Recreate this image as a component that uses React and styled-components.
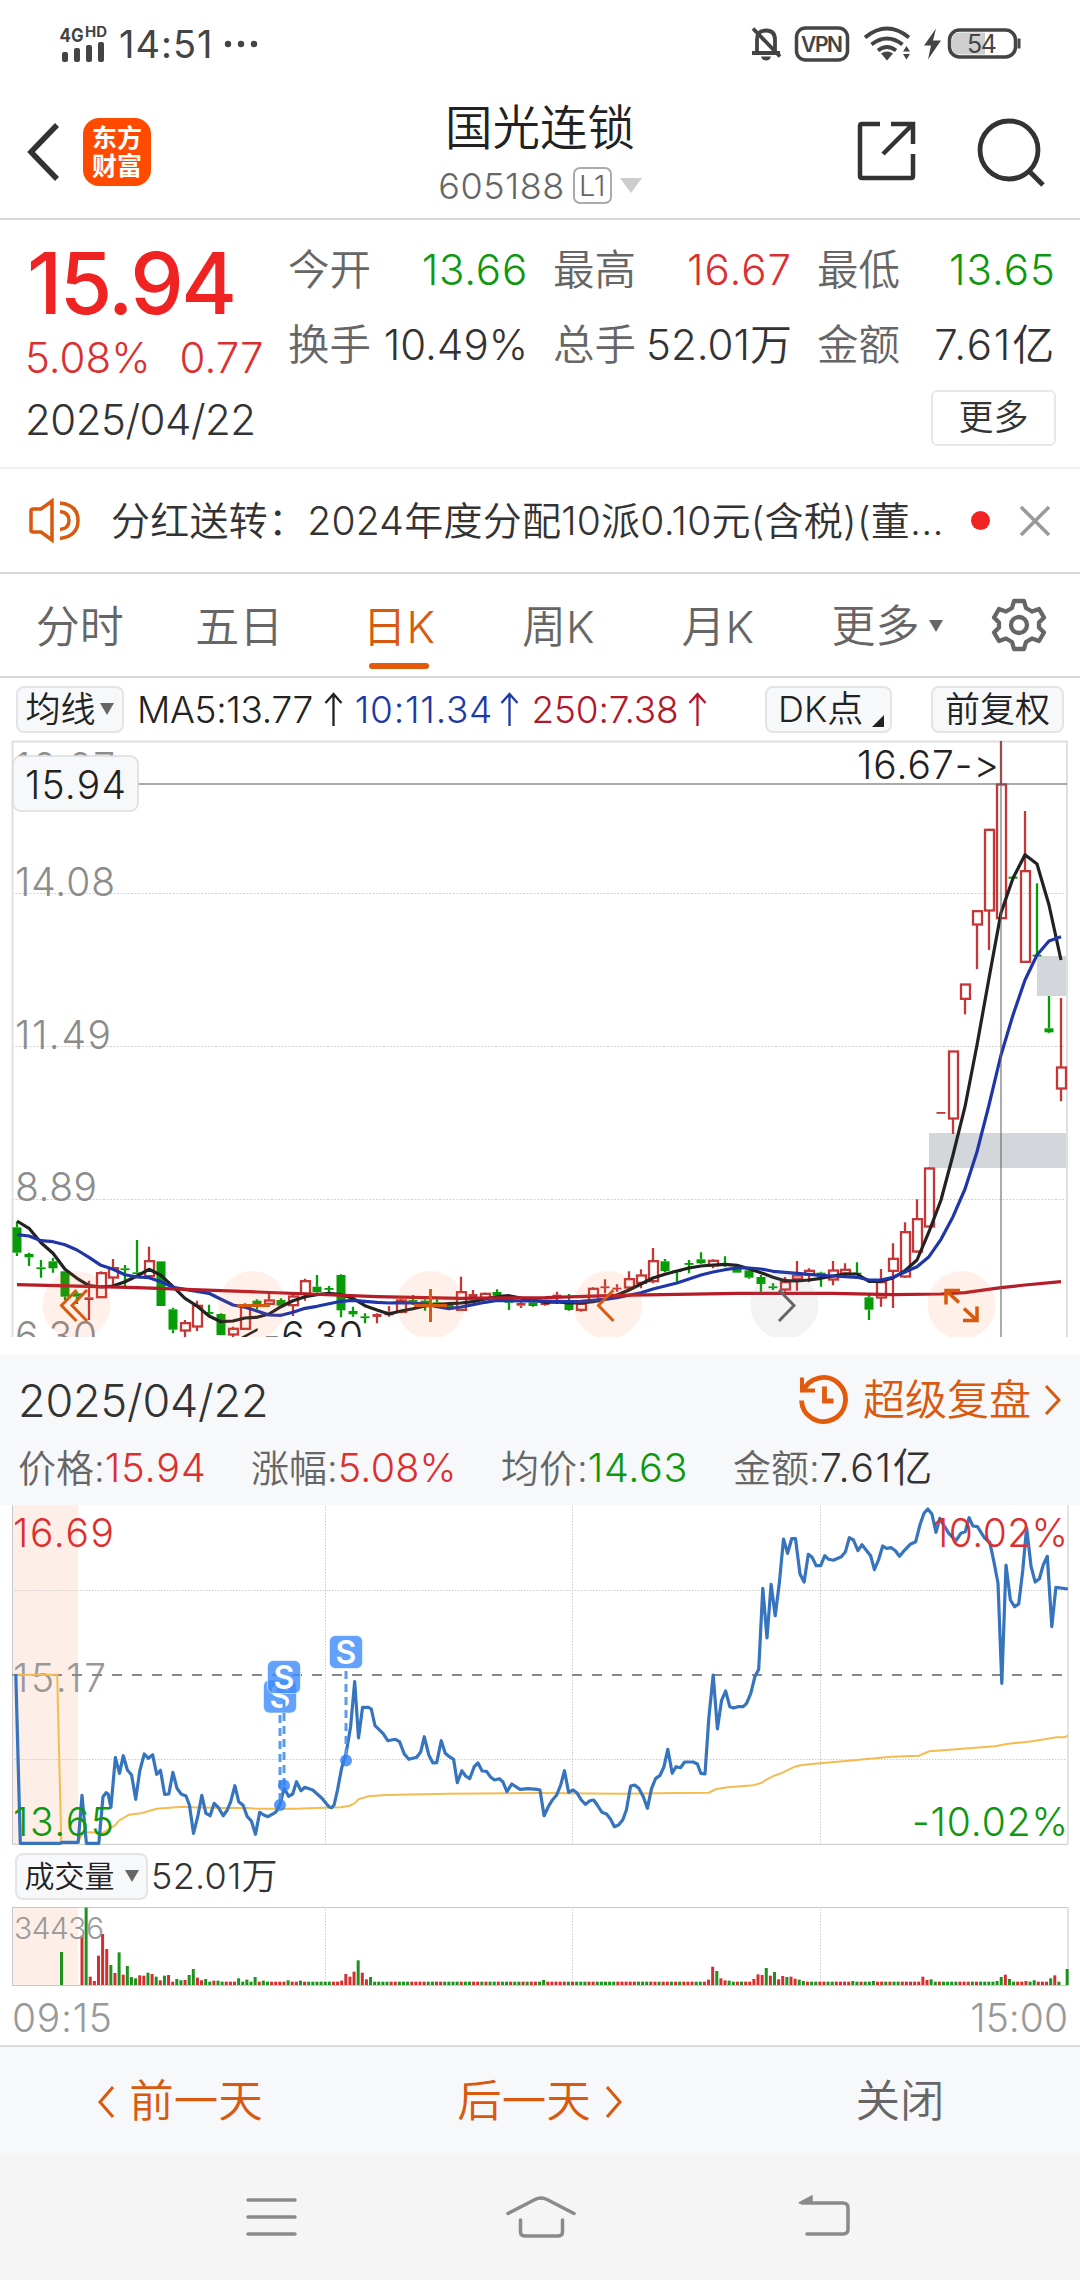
import styled, { createGlobalStyle } from "styled-components";

const GlobalStyle = createGlobalStyle`
  * {
    box-sizing: border-box;
  }

  body {
    margin: 0;
    background: #fff;
    color: #333;
    font-family: Inter, "Noto Sans CJK SC", sans-serif;
    font-weight: 350;
    font-feature-settings: "calt" 0, "liga" 0;
    line-height: 1;
    white-space: nowrap;
  }

  svg {
    display: block;
    flex: none;
  }

  svg text {
    font-family: Inter, "Noto Sans CJK SC", sans-serif;
  }
`;

const RED = "#dc3030";
const GREEN = "#0e980e";
const ORANGE = "#d9590f";

const StScreen = styled.div`
  width: 1080px;
  height: 2280px;
  overflow: hidden;
  background: #fff;
`;

const StText = styled.span`
  font-size: ${(props) => props.$size}px;
  color: ${(props) => props.$color || "#333"};
  letter-spacing: ${(props) => props.$track || 0}px;
  font-weight: ${(props) => props.$weight || 350};
`;

/* ---------- status bar ---------- */

const StStatusBar = styled.div`
  display: flex;
  justify-content: space-between;
  height: 84px;
  padding: 20px 58px 0 59px;
`;

const StStatusSide = styled.div`
  display: flex;
  align-items: center;
  height: 48px;
  gap: ${(props) => props.$gap}px;
`;

function StatusBar() {
  return (
    <StStatusBar>
      <StStatusSide $gap={10}>
        <svg width="50" height="48" viewBox="59 15 50 48" fill="#444">
          <text x="59.500" y="36.500" fontSize="19" fontWeight="700" textLength="24" lengthAdjust="spacingAndGlyphs">4G</text>
          <text x="85" y="32" fontSize="14" fontWeight="700" textLength="22" lengthAdjust="spacingAndGlyphs">HD</text>
          <rect x="62" y="47" width="6" height="10" rx="2" />
          <rect x="74" y="43" width="6" height="14" rx="2" />
          <rect x="86" y="40" width="6" height="17" rx="2" />
          <rect x="98" y="37" width="6" height="20" rx="2" />
        </svg>
        <StText $size={38} $color="#444" $weight={400} $track={1}>14:51</StText>
        <svg width="34" height="8" viewBox="0 0 34 8" fill="#444">
          <circle cx="4" cy="4" r="3.200" />
          <circle cx="17" cy="4" r="3.200" />
          <circle cx="30" cy="4" r="3.200" />
        </svg>
      </StStatusSide>
      <StStatusSide $gap={0}>
        <svg width="272" height="40" viewBox="750 22.500 272 40" fill="none" stroke="#444">
          <path d="M757 50V38q0-9 9-9t9 9v12M752 51.500h28" strokeWidth="3.800" />
          <path d="M761 55h10q-1 4-5 4t-5-4z" fill="#444" stroke="none" />
          <path d="M753 27l27 28" strokeWidth="3.800" />
          <rect x="796.500" y="26.500" width="51" height="32" rx="9" strokeWidth="3.500" />
          <text x="801" y="50.500" fontSize="21" fontWeight="600" fill="#444" stroke="none" textLength="42">VPN</text>
          <path d="M865 36q22-18 44 0M871.500 43q15.500-12 31 0M878 49q9-7 18 0" strokeWidth="4" />
          <path d="M881 52q6-4 12 0l-6 7z" fill="#444" stroke="none" />
          <path d="M903 50l3.500-5.500 3.500 5.500zM903 52.500l3.500 5.500 3.500-5.500z" fill="#444" stroke="none" />
          <path d="M936 27l-12 17h7l-3 14 13-19h-8z" fill="#444" stroke="none" />
          <path d="M960 31h25v22h-25q-8 0-8-8v-6q0-8 8-8z" fill="#cfcfcf" stroke="none" />
          <rect x="949.500" y="28.500" width="66" height="27" rx="10" strokeWidth="3.500" />
          <path d="M1019 37v10" strokeWidth="3" />
          <text x="967" y="51" fontSize="25" fontWeight="400" fill="#444" stroke="none" textLength="30">54</text>
        </svg>
      </StStatusSide>
    </StStatusBar>
  );
}

/* ---------- title bar ---------- */

const StHeader = styled.header`
  display: grid;
  grid-template-columns: 400px 1fr 400px;
  height: 136px;
  border-bottom: 2px solid #dadada;
`;

const StHeaderLeft = styled.div`
  display: flex;
  gap: 20px;
  padding: 34px 0 0 25px;
`;

const StLogo = styled.div`
  display: flex;
  flex-direction: column;
  align-items: center;
  justify-content: center;
  gap: 3px;
  width: 68px;
  height: 68px;
  border-radius: 16px;
  background: #ff4a00;
  color: #fff;
  font-size: 25px;
  font-weight: 700;
`;

const StHeaderTitle = styled.div`
  display: flex;
  flex-direction: column;
  align-items: center;
  padding-top: 20px;
  gap: 15px;
`;

const StCode = styled.div`
  display: flex;
  align-items: center;
  gap: 8px;
  height: 38px;
`;

const StLevel = styled.span`
  width: 39px;
  height: 37px;
  border: 2px solid #aaa;
  border-radius: 7px;
  color: #666;
  font-size: 29px;
  line-height: 34px;
  text-align: center;
`;

const StHeaderRight = styled.div`
  display: flex;
  gap: 56px;
  padding: 31px 0 0 175px;
`;

const StTriangle = styled.i`
  width: 0;
  height: 0;
  border-left: ${(props) => props.$w / 2}px solid transparent;
  border-right: ${(props) => props.$w / 2}px solid transparent;
  border-top: ${(props) => props.$h}px solid ${(props) => props.$color};
`;

function Header() {
  return (
    <StHeader>
      <StHeaderLeft>
        <svg width="38" height="68" viewBox="0 0 38 68" fill="none" stroke="#333" strokeWidth="5.500">
          <path d="M32 7L6 34l26 27" />
        </svg>
        <StLogo>
          <span>东方</span>
          <span>财富</span>
        </StLogo>
      </StHeaderLeft>
      <StHeaderTitle>
        <StText $size={47.5} $color="#222">国光连锁</StText>
        <StCode>
          <StText $size={36} $color="#666" $track={0.5}>605188</StText>
          <StLevel>L1</StLevel>
          <StTriangle $w={22} $h={15} $color="#ccc" />
        </StCode>
      </StHeaderTitle>
      <StHeaderRight>
        <svg width="64" height="72" viewBox="855 117 64 72" fill="none" stroke="#333" strokeWidth="4.500">
          <path d="M880 126h-18q-2 0-2 2v50q0 2 2 2h49q2 0 2-2v-22" />
          <path d="M891 126h22v20M913 126l-30 30" />
        </svg>
        <svg width="74" height="76" viewBox="976 114 74 76" fill="none" stroke="#333" strokeWidth="4.800">
          <circle cx="1010" cy="149" r="29" />
          <path d="M1030 170l14 14" strokeWidth="5" />
        </svg>
      </StHeaderRight>
    </StHeader>
  );
}

/* ---------- quote ---------- */

const StQuote = styled.section`
  display: grid;
  grid-template-columns: 288px 1fr;
  height: 249px;
  padding-top: 28px;
  border-bottom: 2px solid #efefef;
`;

const StQuotePrice = styled.div`
  display: flex;
  flex-direction: column;
  padding-left: 25px;
`;

const StBigPrice = styled.div`
  height: 88px;
  padding-left: 2px;
  color: #f02323;
  font-size: 85px;
  font-weight: 500;
  line-height: 72px;
  letter-spacing: -2.5px;
`;

const StChange = styled.div`
  display: flex;
  gap: 29px;
  height: 63px;
  line-height: 44px;
`;

const StQuoteGrid = styled.div`
  display: grid;
  grid-template-columns: 240px 264px 264px;
  grid-template-rows: 75px 67px;
`;

const StCell = styled.div`
  display: flex;
  justify-content: space-between;
  line-height: 44px;
  padding-left: ${(props) => props.$left || 0}px;
`;

const StMore = styled.div`
  grid-column: 1 / 4;
  justify-self: end;
  width: 125px;
  height: 56px;
  border: 2px solid #e8e8e8;
  border-radius: 6px;
  font-size: 35px;
  line-height: 50px;
  text-align: center;
`;

const quoteCells = [
  ["今开", "13.66", GREEN, 0, 0.8],
  ["最高", "16.67", RED, 25, 1],
  ["最低", "13.65", GREEN, 25, 1],
  ["换手", "10.49%", "#333", 0, 0],
  ["总手", "52.01万", "#333", 25, 0],
  ["金额", "7.61亿", "#333", 25, 1.8],
];

function Quote() {
  return (
    <StQuote>
      <StQuotePrice>
        <StBigPrice>15.94</StBigPrice>
        <StChange>
          <StText $size={42} $color={RED}>5.08%</StText>
          <StText $size={42} $color={RED}>0.77</StText>
        </StChange>
        <StText $size={42} $track={-0.5}>2025/04/22</StText>
      </StQuotePrice>
      <StQuoteGrid>
        {quoteCells.map(([label, value, color, left, track]) => (
          <StCell key={label} $left={left}>
            <StText $size={41.5} $color="#666">{label}</StText>
            <StText $size={42} $color={color} $track={track}>{value}</StText>
          </StCell>
        ))}
        <StMore>更多</StMore>
      </StQuoteGrid>
    </StQuote>
  );
}

/* ---------- notice ---------- */

const StNotice = styled.section`
  display: flex;
  align-items: center;
  height: 105px;
  padding: 0 28px;
  border-bottom: 2px solid #dadada;
`;

const StNoticeText = styled.div`
  width: 836px;
  margin-left: 29px;
  font-size: 39px;
  letter-spacing: 0.25px;
`;

const StDot = styled.i`
  width: 19px;
  height: 19px;
  margin: 0 28px 0 25px;
  border-radius: 50%;
  background: #f02323;
`;

function Notice() {
  return (
    <StNotice>
      <svg width="54" height="46" viewBox="28 498 54 46" fill="none" stroke={ORANGE} strokeWidth="3.500">
        <path d="M52 501v39L41 532h-8q-2 0-2-2v-19q0-2 2-2h8z" />
        <path d="M60 503q18 2 18 17.500T60 538.500M60 511.500q9 1 9 9t-9 9" />
      </svg>
      <StNoticeText>分红送转：2024年度分配10派0.10元(含税)(董...</StNoticeText>
      <StDot />
      <svg width="34" height="34" viewBox="0 0 34 34" stroke="#999" strokeWidth="3.500">
        <path d="M3 3l28 28M31 3L3 31" />
      </svg>
    </StNotice>
  );
}

/* ---------- period tabs ---------- */

const StTabs = styled.nav`
  display: flex;
  height: 104px;
  border-bottom: 2px solid #dadada;
`;

const StTab = styled.div`
  display: flex;
  flex-direction: column;
  align-items: center;
  width: 159.5px;
  padding-top: 31px;
  font-size: 44px;
  color: ${(props) => (props.$active ? ORANGE : "#666")};

  &::after {
    content: "";
    width: 60px;
    height: 6px;
    margin-top: 14px;
    border-radius: 3px;
    background: ${(props) => (props.$active ? "#e35a0c" : "transparent")};
  }
`;

const StTabMore = styled.div`
  display: flex;
  align-items: center;
  gap: 9px;
  width: 193.5px;
  padding: 2px 0 0 34px;
  height: 102px;
  color: #666;
  font-size: 44px;
`;

const tabs = ["分时", "五日", "日K", "周K", "月K"];

function Tabs() {
  return (
    <StTabs>
      {tabs.map((tab) => (
        <StTab key={tab} $active={tab === "日K"}>{tab}</StTab>
      ))}
      <StTabMore>
        更多
        <StTriangle $w={14} $h={12} $color="#666" />
      </StTabMore>
      <svg width="56" height="102" viewBox="-28 -51 56 102" fill="none" stroke="#666" strokeWidth="4.300" strokeLinejoin="round">
        <path d="M-5-24H5l2 7 6 3.500 7-2.500 5 8.500-5 5v5l5 5-5 8.500-7-2.500-6 3.500-2 7H-5l-2-7-6-3.500-7 2.500-5-8.500 5-5v-5l-5-5 5-8.500 7 2.500 6-3.500z" />
        <circle cx="0" cy="0" r="8" />
      </svg>
    </StTabs>
  );
}

/* ---------- moving average bar ---------- */

const StMaBar = styled.div`
  display: flex;
  align-items: center;
  height: 62px;
  padding: 0 16px;
`;

const StChip = styled.div`
  display: flex;
  align-items: center;
  justify-content: center;
  gap: ${(props) => props.$gap || 0}px;
  width: ${(props) => props.$w}px;
  height: 47px;
  margin-left: ${(props) => props.$ml || 0}px;
  border: 2px solid #e3e4e6;
  border-radius: 8px;
  background: #f7f8fa;
  color: #222;
  font-size: ${(props) => props.$size || 35}px;
`;

const StMaItem = styled.div`
  display: flex;
  align-items: center;
  justify-content: space-between;
  width: ${(props) => props.$w}px;
  margin-left: ${(props) => props.$ml}px;
`;

const StCorner = styled.i`
  align-self: flex-end;
  margin: 0 -5px 4px 0;
  border-left: 12px solid transparent;
  border-bottom: 12px solid #222;
`;

const maItems = [
  { text: "MA5:13.77", color: "#222", w: 206, ml: 13, track: -0.3 },
  { text: "10:11.34", color: "#1c3aa6", w: 165, ml: 12, track: 0.8 },
  { text: "250:7.38", color: "#b3182a", w: 176, ml: 12, track: -0.2 },
];

function MaBar() {
  return (
    <StMaBar>
      <StChip $w={108} $gap={5}>
        均线
        <StTriangle $w={15} $h={12} $color="#666" />
      </StChip>
      {maItems.map((item) => (
        <StMaItem key={item.text} $w={item.w} $ml={item.ml}>
          <StText $size={37} $color={item.color} $track={item.track}>{item.text}</StText>
          <svg width="19" height="34" viewBox="0 0 19 34" fill="none" stroke={item.color} strokeWidth="2.300">
            <path d="M9.500 34V3M1.500 11l8-9 8 9" />
          </svg>
        </StMaItem>
      ))}
      <StChip $w={127} $ml={58} $gap={9} $size={36}>
        DK点
        <StCorner />
      </StChip>
      <StChip $w={133} $ml={39} $size={35}>前复权</StChip>
    </StMaBar>
  );
}

/* ---------- daily K chart ---------- */

// [up, high, open/close top, open/close bottom, low], thirds of a pixel from y = 1140
const candles = [
  [0, 245, 262, 338, 348], [0, 338, 342, 352, 378], [0, 360, 382, 385, 413], [0, 354, 364, 385, 398],
  [0, 394, 394, 470, 480], [0, 455, 460, 470, 492], [1, 422, 472, 480, 540], [1, 394, 398, 473, 473],
  [1, 357, 383, 414, 438], [0, 375, 385, 390, 440], [0, 300, 397, 402, 402], [1, 320, 362, 410, 410],
  [0, 364, 364, 498, 498], [0, 503, 508, 569, 580], [1, 540, 548, 573, 591], [1, 482, 496, 561, 573],
  [0, 494, 516, 520, 530], [0, 520, 522, 585, 585], [1, 560, 565, 585, 591], [1, 490, 495, 568, 570],
  [0, 478, 482, 495, 508], [1, 460, 480, 493, 495], [0, 475, 480, 497, 503], [1, 463, 468, 497, 528],
  [1, 416, 422, 463, 482], [0, 405, 440, 456, 458], [0, 438, 444, 447, 458], [0, 403, 405, 511, 532],
  [0, 500, 513, 523, 530], [0, 520, 529, 532, 550], [1, 520, 522, 531, 550], [1, 498, 515, 526, 530],
  [1, 477, 480, 517, 520], [0, 465, 480, 485, 495], [0, 478, 482, 500, 512], [0, 478, 487, 490, 500],
  [0, 487, 492, 503, 505], [1, 410, 455, 511, 511], [1, 450, 462, 473, 475], [1, 458, 460, 475, 475],
  [0, 448, 456, 467, 470], [0, 480, 483, 488, 510], [1, 483, 489, 497, 504], [0, 483, 487, 498, 500],
  [1, 480, 484, 495, 497], [1, 455, 464, 470, 492], [0, 462, 487, 510, 512], [1, 485, 490, 511, 515],
  [1, 442, 445, 485, 487], [1, 418, 439, 443, 460], [1, 433, 443, 446, 455], [1, 394, 416, 444, 450],
  [1, 388, 405, 430, 445], [1, 324, 362, 425, 430], [0, 357, 364, 393, 397], [0, 390, 391, 394, 425],
  [0, 360, 369, 372, 400], [0, 337, 358, 370, 372], [1, 358, 361, 378, 385], [0, 349, 370, 374, 380],
  [0, 375, 385, 398, 398], [0, 388, 391, 413, 416], [0, 405, 411, 432, 455], [0, 430, 439, 442, 450],
  [1, 411, 425, 450, 455], [1, 363, 405, 418, 452], [1, 385, 391, 405, 427], [0, 395, 398, 410, 440],
  [1, 363, 390, 420, 436], [1, 370, 388, 402, 408], [0, 367, 398, 402, 405], [0, 462, 472, 509, 540],
  [1, 387, 425, 474, 500], [1, 310, 355, 394, 504], [1, 247, 275, 411, 413], [1, 178, 236, 336, 338],
  [1, 82, 84, 261, 261], [1, -84, -84, -79, -79], [1, -267, -267, -63, -18], [1, -468, -468, -422, -377],
  [1, -690, -688, -645, -513], [1, -934, -932, -687, -570], [1, -1197, -1068, -664, -664], [0, -792, -790, -784, -783],
  [1, -987, -808, -533, -533], [0, -770, -556, -551, -551], [0, -432, -335, -323, -320], [1, -426, -219, -153, -116],
];

const ma5 = [
  243, 265, 308, 340, 388, 415, 437, 441, 438, 425, 408, 388, 406, 440, 475, 498, 528, 545, 543, 534, 532, 522,
  500, 482, 470, 464, 460, 464, 475, 497, 510, 522, 513, 506, 498, 494, 491, 489, 485, 477, 470, 467, 474, 480,
  487, 486, 489, 489, 485, 478, 465, 450, 432, 414, 403, 393, 384, 378, 375, 373, 376, 386, 398, 412, 422, 423,
  420, 415, 408, 402, 402, 424, 424, 414, 392, 360, 275, 180, 45, -100, -285, -485, -682, -785, -856, -828, -705, -540,
];

const ma10 = [
  284, 288, 302, 305, 314, 330, 352, 376, 388, 404, 411, 413, 425, 442, 448, 454, 460, 478, 495, 502, 513, 525,
  526, 517, 505, 499, 491, 484, 481, 484, 487, 489, 488, 489, 492, 500, 506, 501, 494, 487, 481, 482, 483, 482,
  483, 484, 485, 484, 481, 478, 473, 466, 458, 447, 438, 429, 417, 405, 396, 389, 384, 384, 387, 394, 397, 400,
  403, 406, 408, 410, 412, 420, 420, 412, 396, 380, 350, 298, 230, 147, 35, -105, -255, -375, -480, -555, -597, -610,
];

const ma250 = [
  [0, 434], [10, 443], [20, 456], [30, 470], [37, 475], [44, 473], [50, 466], [60, 460],
  [68, 460], [73, 464], [77, 462], [79, 458], [82, 443], [84, 435], [87, 425],
];

const dayX = (i) => 17 + i * 12;
const dayY = (v) => 1140 + v / 3;
const dayLine = (pairs) => pairs.map(([i, v]) => `${dayX(i)},${dayY(v).toFixed(1)}`).join(" ");

function Candle({ index, data }) {
  const [up, high, top, bottom, low] = data;
  const x = dayX(index);
  const color = up ? "#c63636" : "#069c06";
  const height = (bottom - top) / 3;
  const solid = !up || height < 4;
  return (
    <g stroke={color} strokeWidth="2.300">
      <path d={`M${x} ${dayY(high)}V${dayY(top)}M${x} ${dayY(bottom)}V${dayY(low)}`} />
      {solid ? (
        <rect x={x - 4.5} y={dayY(top)} width="9" height={Math.max(height, 1.8)} fill={color} stroke="none" />
      ) : (
        <rect x={x - 4} y={dayY(top) + 0.5} width="9" height={height - 1} fill="none" />
      )}
    </g>
  );
}

const StChart = styled.svg`
  width: 1080px;
  height: ${(props) => props.$h}px;
  margin-bottom: ${(props) => props.$mb || 0}px;
`;

function DayChart() {
  return (
    <StChart $h={597} $mb={18} viewBox="0 740 1080 597">
      <g fill="#d3d7dc">
        <rect x="929" y="1133" width="138" height="35" />
        <rect x="1037" y="956" width="30" height="40" />
      </g>
      <g stroke="#d2d2d2" strokeDasharray="2 1.500">
        <path d="M12 893.500H1067M12 1046.500H1067M12 1199.500H1067" />
      </g>
      <path d="M12.500 1337V741.500H1067V1337" fill="none" stroke="#e0e0e0" strokeWidth="2" />
      <g fill="#8c8c8c" fontSize="39">
        <text x="15" y="780.500" textLength="100">16.67</text>
        <text x="15" y="895.500" textLength="100">14.08</text>
        <text x="15" y="1048.500" textLength="96">11.49</text>
        <text x="15" y="1201" textLength="82">8.89</text>
        <text x="15" y="1350" textLength="82">6.30</text>
      </g>
      {candles.map((data, index) => (
        <Candle key={index} index={index} data={data} />
      ))}
      <g fill="none" strokeWidth="3.200" strokeLinejoin="round">
        <polyline points={dayLine(ma5.map((v, i) => [i, v]))} stroke="#222" />
        <polyline points={dayLine(ma10.map((v, i) => [i, v]))} stroke="#2036a8" />
        <polyline points={dayLine(ma250)} stroke="#b51c28" />
      </g>
      <g fill="#222" fontSize="39">
        <text x="857" y="779" textLength="142">16.67-&gt;</text>
        <text x="237" y="1350" textLength="126">&lt;-6.30</text>
      </g>
      <path d="M138 784H1067M1001 741V1337" stroke="#666" strokeOpacity=".55" strokeWidth="2" />
      <rect x="13" y="756" width="125" height="55" rx="8" fill="#f7f8fa" stroke="#dcdcdc" strokeWidth="1.500" />
      <text x="25" y="798.500" fontSize="39" fill="#222" textLength="101">15.94</text>
      <g fill="#fb6a28" fillOpacity=".1">
        <circle cx="76.500" cy="1305" r="34" />
        <circle cx="252.500" cy="1305" r="34" />
        <circle cx="430.500" cy="1305" r="34" />
        <circle cx="608" cy="1305" r="34" />
        <circle cx="784.500" cy="1305" r="34" fill="#888" />
        <circle cx="961.500" cy="1305" r="34" />
      </g>
      <g fill="none" stroke={ORANGE} strokeWidth="3">
        <path d="M76.500 1290l-15 15.500 15 15.500M87 1290l-15 15.500 15 15.500" />
        <path d="M237 1305.500h33M414 1305.500h33M430.500 1289v33" />
        <path d="M613.500 1290l-15 15.500 15 15.500" />
        <path d="M779 1290l15 15.500-15 15.500" stroke="#666" />
        <path d="M960 1290.500h-14v14M946 1290.500l13 12M963 1320.500h14v-14M977 1320.500l-13-12" strokeWidth="3.500" />
      </g>
    </StChart>
  );
}

/* ---------- day detail ---------- */

const StDetail = styled.section`
  height: 150px;
  padding: 17px 19px 0 18px;
  background: #f7f8fa;
`;

const StDetailTop = styled.div`
  display: flex;
  align-items: center;
  justify-content: space-between;
  height: 56px;
`;

const StReplay = styled.div`
  display: flex;
  align-items: center;
  color: ${ORANGE};
  font-size: 42px;

  span {
    margin: 0 12px 0 13px;
  }
`;

const StDetailRow = styled.div`
  display: flex;
  height: 50px;
  margin-top: 15px;
  font-size: 38px;
  line-height: 38px;
`;

const StDetailItem = styled.div`
  width: ${(props) => props.$w}px;
  padding: 6px 0 0 0;
`;

const detailItems = [
  ["价格", "15.94", RED, 233, 0.9],
  ["涨幅", "5.08%", RED, 250, 0.2],
  ["均价", "14.63", GREEN, 232, 0.7],
  ["金额", "7.61亿", "#333", 220, 1.6],
];

function Detail() {
  return (
    <StDetail>
      <StDetailTop>
        <StText $size={45} $track={-0.2}>2025/04/22</StText>
        <StReplay>
          <svg width="52" height="52" viewBox="799 1373.500 52 52" fill="none" stroke="#e35a0c" strokeWidth="4.800">
            <path d="M804 1391a22 22 0 1 1-1.500 9" />
            <path d="M803 1377v13h13" strokeWidth="4" />
            <path d="M825.500 1386v14.500h9" />
          </svg>
          <span>超级复盘</span>
          <svg width="18" height="34" viewBox="0 0 18 34" fill="none" stroke={ORANGE} strokeWidth="3">
            <path d="M3 3l13 14L3 31" />
          </svg>
        </StReplay>
      </StDetailTop>
      <StDetailRow>
        {detailItems.map(([label, value, color, w, track]) => (
          <StDetailItem key={label} $w={w}>
            <StText $size={38} $color="#666">{label}:</StText>
            <StText $size={39.5} $color={color} $track={track}>{value}</StText>
          </StDetailItem>
        ))}
      </StDetailRow>
    </StDetail>
  );
}

/* ---------- minute chart ---------- */

const UNIT = 540 / 1568;
const minuteLine = (pairs) =>
  pairs.map(([x, v]) => `${(x * UNIT).toFixed(1)},${(1500 + v / 3).toFixed(1)}`).join(" ");
const shift = (pairs) => pairs.map(([x, v]) => [x + 1568, v]);

const priceMorning = [
  [46, 522], [59, 1030], [175, 1030], [178, 1027], [227, 1027], [238, 886], [251, 1030], [287, 1030], [299, 890],
  [308, 878], [314, 882], [322, 922], [335, 773], [347, 820], [358, 767], [370, 810], [382, 825], [394, 898],
  [406, 812], [419, 762], [431, 775], [443, 764], [455, 823], [466, 811], [478, 883], [490, 882], [502, 817],
  [514, 865], [526, 882], [540, 888], [550, 915], [562, 1000], [574, 950], [586, 886], [598, 940], [610, 947],
  [622, 910], [634, 922], [648, 947], [660, 930], [670, 905], [682, 857], [693, 905], [706, 916], [718, 950],
  [730, 963], [742, 1003], [754, 937], [766, 945], [778, 950], [795, 940], [802, 935], [813, 913], [825, 865],
  [838, 889], [850, 882], [861, 845], [874, 872], [885, 862], [908, 870], [935, 895], [955, 920], [963, 923],
  [970, 915], [980, 870], [992, 805], [1005, 760], [1018, 680], [1030, 545], [1041, 714], [1053, 622], [1070, 622],
  [1078, 627], [1089, 677], [1112, 700], [1126, 722], [1148, 718], [1160, 725], [1174, 762], [1187, 778],
  [1210, 772], [1222, 755], [1232, 710], [1245, 765], [1257, 789], [1268, 788], [1281, 722], [1293, 760],
  [1305, 770], [1317, 778], [1328, 848], [1341, 812], [1352, 828], [1364, 836], [1377, 800], [1388, 789],
  [1400, 813], [1413, 814], [1425, 832], [1436, 840], [1450, 836], [1460, 845], [1472, 875], [1486, 852],
  [1510, 868], [1535, 866], [1560, 868],
];

const priceAfternoon = [
  [0, 870], [12, 947], [24, 920], [36, 900], [48, 886], [60, 855], [71, 812], [83, 877], [96, 870], [107, 878],
  [120, 900], [132, 913], [145, 902], [156, 900], [168, 918], [180, 937], [193, 942], [205, 958], [216, 980],
  [228, 975], [240, 960], [251, 930], [263, 858], [275, 855], [287, 865], [300, 890], [312, 925], [324, 865],
  [336, 835], [348, 827], [360, 800], [371, 748], [384, 820], [395, 800], [408, 803], [420, 786], [445, 786],
  [457, 792], [467, 820], [479, 822], [490, 655], [503, 525], [515, 687], [527, 602], [539, 573], [551, 620],
  [562, 624], [575, 620], [590, 620], [600, 610], [612, 580], [624, 530], [635, 508], [647, 265], [659, 414],
  [671, 253], [683, 347], [695, 250], [707, 117], [719, 160], [731, 116], [742, 116], [755, 222], [767, 246],
  [779, 163], [790, 172], [802, 197], [815, 197], [827, 167], [838, 178], [852, 181], [875, 170], [887, 155],
  [898, 113], [910, 120], [923, 152], [935, 134], [947, 150], [960, 167], [971, 209], [983, 180], [995, 138],
  [1006, 145], [1020, 143], [1032, 152], [1044, 169], [1055, 155], [1075, 133], [1091, 125], [1103, 75],
  [1115, 40], [1126, 27], [1138, 42], [1150, 97], [1161, 55], [1175, 80], [1187, 100], [1208, 122], [1222, 100],
  [1235, 95], [1246, 53], [1257, 78], [1270, 80], [1290, 113], [1306, 127], [1318, 185], [1330, 250], [1341, 550],
  [1353, 195], [1366, 300], [1378, 320], [1390, 312], [1402, 210], [1413, 83], [1426, 200], [1438, 246],
  [1450, 236], [1461, 195], [1473, 169], [1486, 380], [1498, 262], [1533, 267],
];

const average = [
  [38, 524], [166, 524], [178, 1030], [227, 1027], [240, 999], [255, 997], [300, 998], [335, 975], [345, 962],
  [375, 944], [410, 940], [455, 926], [530, 920], [560, 922], [640, 924], [720, 924], [745, 926], [860, 926],
  [940, 923], [990, 922], [1015, 917], [1030, 910], [1040, 898], [1070, 889], [1120, 885], [1300, 881],
  ...shift([
    [0, 879], [230, 881], [400, 879], [490, 878], [510, 868], [545, 862], [620, 856], [645, 848], [655, 840],
    [680, 827], [700, 820], [740, 800], [760, 795], [830, 788], [920, 780], [1020, 770], [1100, 767], [1130, 754],
    [1180, 750], [1320, 739], [1360, 731], [1430, 724], [1500, 712], [1523, 712], [1533, 707],
  ]),
];

function SellMark({ x, y, from, to }) {
  return (
    <g>
      <path d={`M${x} ${from}V${to}`} stroke="#5a9bea" strokeWidth="3" strokeDasharray="8 5" />
      <circle cx={x} cy={to} r="6" fill="#2f80f5" fillOpacity=".8" />
      <rect x={x - 16.5} y={y} width="33" height="33" rx="6" fill="#3f8dfb" fillOpacity=".82" stroke="#fff" strokeOpacity=".6" />
      <text x={x} y={y + 28} fontSize="32" fontWeight="600" fill="#fff" textAnchor="middle">S</text>
    </g>
  );
}

function MinuteChart() {
  return (
    <StChart $h={340} viewBox="0 1505 1080 340">
      <rect x="12" y="1505" width="66" height="339" fill="#fdeee8" />
      <g stroke="#ccc" strokeDasharray="1.500 1.500">
        <path d="M325.500 1506V1844M572.500 1506V1844M820.500 1506V1844M14 1590.500H1067M14 1759.500H1067" />
      </g>
      <path d="M12.500 1505V1844.300H1068V1505" fill="none" stroke="#c8c8c8" />
      <text x="13" y="1692" fontSize="39" fill="#999" textLength="93">15.17</text>
      <path d="M12 1675H1066" stroke="#888" strokeWidth="2" strokeDasharray="10 10" />
      <polyline points={minuteLine(average)} fill="none" stroke="#f2bc50" strokeWidth="2" />
      <polyline
        points={minuteLine([...priceMorning, ...shift(priceAfternoon)])}
        fill="none"
        stroke="#3674bd"
        strokeWidth="3.200"
        strokeLinejoin="round"
      />
      <g fontSize="39">
        <text x="13" y="1546.500" fill={RED} textLength="101">16.69</text>
        <text x="13" y="1835.500" fill={GREEN} textLength="101">13.65</text>
        <text x="933" y="1546.500" fill={RED} textLength="135">10.02%</text>
        <text x="912" y="1835.500" fill={GREEN} textLength="156">-10.02%</text>
      </g>
      <SellMark x={280} y={1680} from={1715} to={1805} />
      <SellMark x={284} y={1660.5} from={1700} to={1785.500} />
      <SellMark x={346} y={1635.500} from={1671} to={1760.500} />
    </StChart>
  );
}

/* ---------- volume ---------- */

const StVolumeBar = styled.div`
  display: flex;
  align-items: center;
  gap: 3px;
  height: 62px;
  padding-left: 15px;
`;

const volumeColors =
  "RGRRRRRGRGRGGGRRGRGRGRRGGRGGRRGGRGGRRRGGGGGRGGRRRRGRRGRGGGGG" +
  "GRRRRRRGRRGGGGGRRGGGRRRRGGRRGGGGRGGRRGRGGRGGRGGRGRRGGRRRRRGR" +
  "GGGRRGGGGGRRRRRGGGRRGRRGRGRRRGGRRRGRRGGRGRRRRRGRGRRGRRGGRGGR" +
  "RGGRRRRGGRGGGRRGRGGRRRRRRRGGRGGGGRRRGRGGGGGGRGGRRRGGRRRGRG.G";

// bars taller than the usual floor of 10
const volumePeaks = {
  0: 148, 1: 232, 2: 25, 3: 12, 4: 88, 5: 153, 6: 108, 7: 60, 8: 36, 9: 98, 10: 31, 11: 57, 12: 24, 13: 20,
  14: 29, 15: 28, 16: 37, 17: 33, 18: 25, 19: 14, 20: 28, 21: 30, 23: 18, 24: 14, 25: 15, 26: 30, 27: 48,
  28: 22, 29: 14, 30: 18, 32: 13, 33: 13, 38: 20, 40: 16, 42: 24, 44: 13, 50: 14, 53: 13, 63: 13, 64: 33,
  65: 25, 66: 40, 67: 74, 68: 37, 69: 17, 70: 24, 112: 15, 152: 16, 153: 55, 154: 42, 155: 20, 156: 14,
  157: 13, 163: 18, 164: 32, 165: 30, 166: 51, 167: 28, 168: 39, 169: 17, 170: 27, 171: 24, 172: 25, 173: 19,
  174: 16, 175: 12, 187: 12, 192: 12, 204: 25, 205: 15, 206: 17, 222: 12, 223: 24, 224: 31, 225: 18, 229: 12,
  231: 14, 235: 20, 236: 29, 239: 48,
};

const StTimes = styled.div`
  display: flex;
  justify-content: space-between;
  align-items: center;
  height: 59px;
  padding: 4px 12px 0 12px;
`;

function Volume() {
  return (
    <>
      <StVolumeBar>
        <StChip $w={133} $gap={10} $size={30}>
          成交量
          <StTriangle $w={15} $h={12} $color="#666" />
        </StChip>
        <StText $size={36} $track={0.3}>52.01万</StText>
      </StVolumeBar>
      <StChart $h={79} viewBox="0 1907 1080 79">
        <rect x="12" y="1907" width="66" height="78" fill="#fdeee8" />
        <path d="M325.500 1909V1985M572.500 1909V1985M820.500 1909V1985" stroke="#ccc" strokeDasharray="1.500 1.500" />
        <rect x="12.500" y="1907.500" width="1055.500" height="78" fill="none" stroke="#c8c8c8" />
        <rect x="60" y="1952" width="3" height="33" fill="#1d931d" />
        {volumeColors.split("").map((c, i) => {
          const height = c === "." ? 0 : (volumePeaks[i] || 10) / 3;
          return (
            <rect
              key={i}
              x={80.5 + i * 4.122}
              y={1985 - height}
              width="3"
              height={height}
              fill={c === "R" ? "#d23030" : "#1d931d"}
            />
          );
        })}
        <text x="14" y="1939" fontSize="30" fill="#999" textLength="90">34436</text>
      </StChart>
      <StTimes>
        <StText $size={39} $color="#999" $track={0.7}>09:15</StText>
        <StText $size={39} $color="#999">15:00</StText>
      </StTimes>
    </>
  );
}

/* ---------- bottom ---------- */

const StActions = styled.footer`
  display: grid;
  grid-template-columns: 360px 360px 360px;
  height: 109px;
  border-top: 2px solid #dadada;
  background: #f7f8fa;
`;

const StAction = styled.div`
  display: flex;
  align-items: center;
  justify-content: center;
  gap: 14px;
  padding-top: 2px;
  font-size: 44.5px;
  color: ${(props) => (props.$muted ? "#666" : ORANGE)};
`;

const StNavBar = styled.div`
  height: 126px;
  background: #f5f5f5;
`;

function Bottom() {
  return (
    <>
      <StActions>
        <StAction>
          <svg width="18" height="36" viewBox="0 0 18 36" fill="none" stroke={ORANGE} strokeWidth="3">
            <path d="M16 3L3 18l13 15" />
          </svg>
          前一天
        </StAction>
        <StAction>
          后一天
          <svg width="18" height="36" viewBox="0 0 18 36" fill="none" stroke={ORANGE} strokeWidth="3">
            <path d="M2 3l13 15L2 33" />
          </svg>
        </StAction>
        <StAction $muted>关闭</StAction>
      </StActions>
      <StNavBar>
        <svg width="1080" height="126" viewBox="0 2154 1080 126" fill="none" stroke="#8a8a8a" strokeWidth="3.500" strokeLinecap="round">
          <path d="M248 2200h47M248 2217h47M248 2234h47" />
          <path d="M508 2213.500l27-14q6-3 12 0l27 14" />
          <path d="M520.500 2220v12q0 4 5 4h32q5 0 5-4v-12" />
          <path d="M802 2203h41q5 0 5 5v21q0 5-5 5h-36" />
          <path d="M799 2203l13-7v7z" fill="#8a8a8a" strokeWidth="1.500" />
        </svg>
      </StNavBar>
    </>
  );
}

export default function App() {
  return (
    <StScreen>
      <GlobalStyle />
      <StatusBar />
      <Header />
      <Quote />
      <Notice />
      <Tabs />
      <MaBar />
      <DayChart />
      <Detail />
      <MinuteChart />
      <Volume />
      <Bottom />
    </StScreen>
  );
}
